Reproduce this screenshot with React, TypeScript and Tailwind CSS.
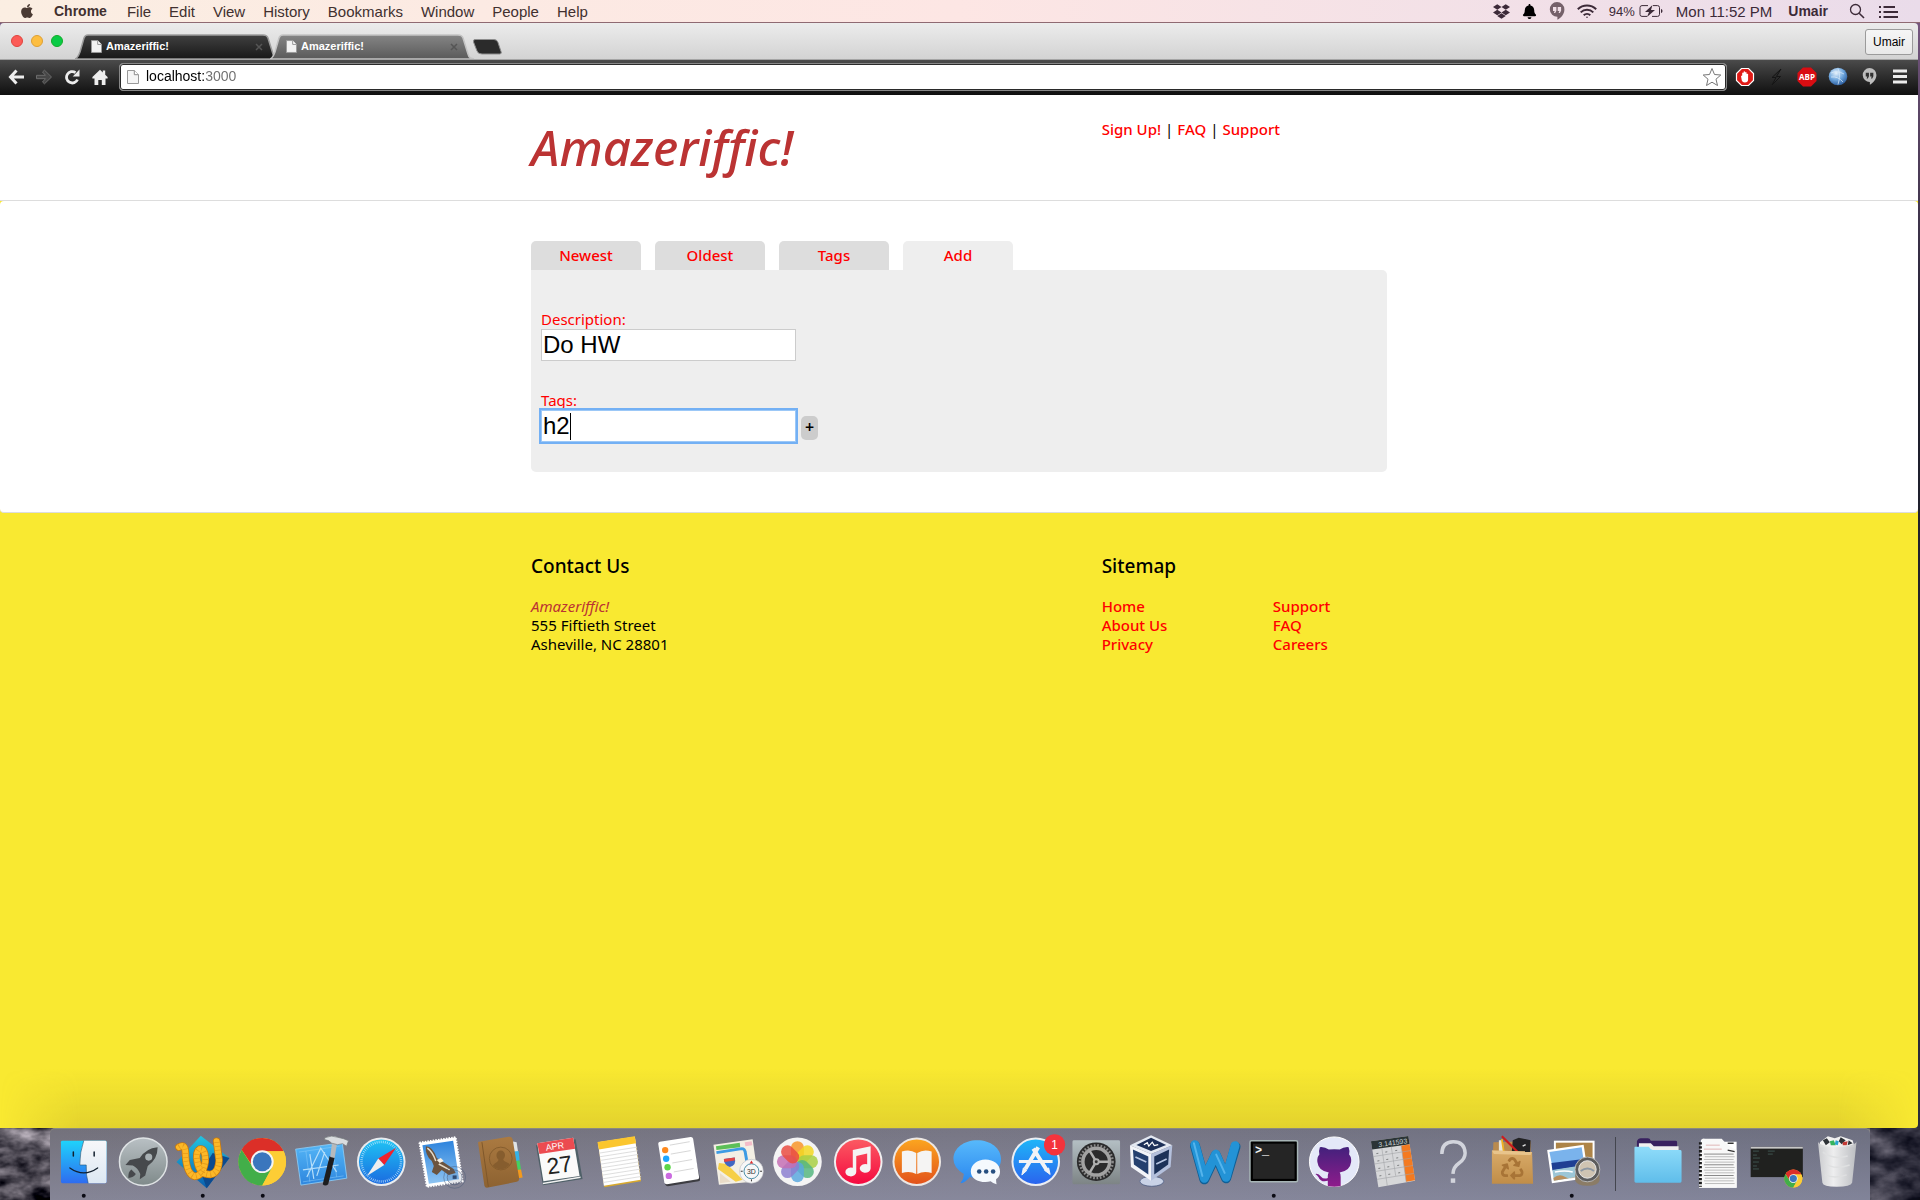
import React from "react";
import { FaApple, FaDropbox, FaBell, FaRecycle } from "react-icons/fa";

const SANS = "font-['Liberation_Sans',Arial,sans-serif]";
const BODY = "font-['Noto_Sans','Open_Sans',sans-serif]";

/* ---------- menu bar ---------- */

function Hangouts({ className }: { className: string }) {
  return (
    <svg viewBox="0 0 16 18" className={className} aria-hidden="true">
      <path
        fill="currentColor"
        fillRule="evenodd"
        d="M8 0a7.4 7.4 0 0 1 7.4 7.4c0 4.6-3.4 8.4-7 10.4v-3A7.4 7.4 0 0 1 8 0ZM4 5v4h1.7L4.9 11h1.3l1.2-2.3V5H4Zm4.7 0v4h1.7l-.8 2h1.3l1.2-2.3V5H8.700Z"
      />
    </svg>
  );
}

function MenuBar() {
  return (
    <header
      className={`${SANS} flex h-[23px] shrink-0 items-center justify-between border-b border-[#8f6a72] bg-linear-to-r from-[#fbeee2] via-[#fde6e4] to-[#eadcea] text-[15px] leading-none text-[#41302f]`}
    >
      <nav className="flex items-center" aria-label="Menu bar">
        <FaApple className="ml-[19px] size-4 text-[#4a3a33]" />
        <button className="ml-[19px] text-[14px] font-bold">Chrome</button>
        <div className="ml-5 flex gap-[18px]">
          {["File", "Edit", "View", "History", "Bookmarks", "Window", "People", "Help"].map((m) => (
            <button key={m}>{m}</button>
          ))}
        </div>
      </nav>
      <div className="flex items-center pr-[22px] text-[#3c2a38]">
        <FaDropbox className="size-[17px]" />
        <FaBell className="ml-3 size-[15px] text-black" />
        <Hangouts className="ml-3 h-[18px] w-4 text-[#75616a]" />
        <svg viewBox="0 0 20 15" className="ml-3 h-[15px] w-5" fill="none" stroke="currentColor" strokeWidth="2" aria-hidden="true">
          <path d="M.8 5.3a13.2 13.2 0 0 1 18.4 0M3.7 8.4a9 9 0 0 1 12.6 0M6.7 11.3a4.8 4.8 0 0 1 6.6 0" />
          <circle cx="10" cy="13.3" r=".8" fill="currentColor" stroke="none" />
        </svg>
        <span className="ml-3 text-[13px]">94%</span>
        <svg viewBox="0 0 24 12" className="ml-1 h-3 w-6" aria-hidden="true">
          <path d="M9 .6H3A2 2 0 0 0 1 2.600v6.800a2 2 0 0 0 2 2h5M14 .6h4.500a2 2 0 0 1 2 2v6.800a2 2 0 0 1-2 2H13" fill="none" stroke="currentColor" />
          <path d="M22 4v4c1-.4 1.500-1.200 1.500-2S23 4.400 22 4ZM13.500 0 6 7h4l-2 5 8-7h-4Z" fill="currentColor" />
        </svg>
        <span className="ml-[13px]">Mon 11:52 PM</span>
        <span className="ml-4 text-[14px] font-bold">Umair</span>
        <svg viewBox="0 0 16 16" className="ml-[21px] size-4" fill="none" stroke="currentColor" aria-hidden="true">
          <circle cx="6.500" cy="6.500" r="5" strokeWidth="1.300" />
          <path d="m10.200 10.200 4.800 4.800" strokeWidth="1.600" />
        </svg>
        <svg viewBox="0 0 19 13" className="ml-[14px] h-[13px] w-[19px]" stroke="currentColor" strokeWidth="2" aria-hidden="true">
          <path d="M0 2h2M0 7h2M0 12h2M4.500 2H16M4.500 7H19M4.500 12H19" />
        </svg>
      </div>
    </header>
  );
}

/* ---------- browser chrome ---------- */

function PageIcon({ className, fill }: { className: string; fill: string }) {
  return (
    <svg viewBox="0 0 12 14" className={className} aria-hidden="true">
      <path d="M.5.5h6.800l4.200 4.200v8.800H.5Z" fill={fill} stroke="#999" />
      <path d="M7.300.5v4.200h4.200" fill="#fff" stroke="#8a8a8a" />
    </svg>
  );
}

function BrowserTab({ active }: { active?: boolean }) {
  return (
    <div className={active ? "relative -ml-[9px] h-[25px] w-[204px]" : "relative h-[25px] w-[204px]"}>
      <svg viewBox="0 0 204 25" className="absolute inset-0 h-full w-full" preserveAspectRatio="none" aria-hidden="true">
        <defs>
          <linearGradient id={active ? "tabOn" : "tabOff"} x1="0" y1="0" x2="0" y2="1">
            <stop offset="0" stopColor={active ? "#858585" : "#404040"} />
            <stop offset="1" stopColor={active ? "#5a5a5a" : "#181818"} />
          </linearGradient>
        </defs>
        <path
          d="M0 25C3 24 4 21 5 18L9 4Q10 1 13 1H188Q192 1 193 4L198 20Q199 25 204 25Z"
          fill={active ? "url(#tabOn)" : "url(#tabOff)"}
          stroke={active ? "#c4c4c4" : "#9c9c9c"}
          strokeWidth="1.500"
        />
      </svg>
      <div className="relative flex h-full items-center pr-4 pl-4">
        <PageIcon className="h-[13px] w-[11px]" fill="#f2f2f2" />
        <button className="ml-1 grow text-left text-[11px] font-bold text-white">Amazeriffic!</button>
        <button aria-label="Close tab" className="text-[#555]">
          <svg viewBox="0 0 8 8" className="size-2" stroke="currentColor" strokeWidth="1.500" aria-hidden="true">
            <path d="m1 1 6 6M7 1 1 7" />
          </svg>
        </button>
      </div>
    </div>
  );
}

function TabStrip() {
  return (
    <div className="flex h-9 items-end rounded-t bg-linear-to-b from-[#ececec] to-[#d3d3d3]">
      <div className="flex h-full items-center gap-2 pl-[11px]">
        <span className="size-3 rounded-full border border-[#e0443e] bg-[#fc5b57]" />
        <span className="size-3 rounded-full border border-[#dea034] bg-[#fdbe41]" />
        <span className="size-3 rounded-full border border-[#12ac28] bg-[#0acb46]" />
      </div>
      <div className="ml-3 flex">
        <BrowserTab />
        <BrowserTab active />
        <button aria-label="New tab" className="-ml-[2px]">
          <svg viewBox="0 0 31 25" className="h-[25px] w-[31px]" aria-hidden="true">
            <path d="M3 5.500H22q3 0 4 3l3 9q1 2-1 2.500H10q-4 0-5-3L1.500 8Q1 5.500 3 5.500Z" fill="#2b2b2b" stroke="#8d8d8d" />
          </svg>
        </button>
      </div>
      <button className="mr-[5px] mb-1 ml-auto h-[26px] rounded-[3px] border border-[#9b9b9b] bg-linear-to-b from-[#f6f6f6] to-[#e9e9e9] px-[7px] text-[12px] text-black">
        Umair
      </button>
    </div>
  );
}

const toolButton = "flex size-5 items-center justify-center";

function Toolbar() {
  return (
    <div className="flex h-9 items-center border-t border-[#a5a5a5] bg-linear-to-b from-[#4b4b4b] to-[#101010] pb-[2px]">
      <div className="flex w-[119px] shrink-0 gap-2 pl-[6px] text-[#ededed]">
        <button aria-label="Back" className={toolButton}>
          <svg viewBox="0 0 16 16" className="size-4" fill="none" stroke="currentColor" strokeWidth="3" aria-hidden="true">
            <path d="M8.500 1.500 2.500 8l6 6.500M2.500 8H16" />
          </svg>
        </button>
        <button aria-label="Forward" className={toolButton}>
          <svg viewBox="0 0 16 16" className="size-4" fill="#474747" stroke="#6c6c6c" aria-hidden="true">
            <path d="M.5 6.300h9L6.500 3l2-1.800L15.500 8l-7 6.800-2-1.800 3-3.300h-9Z" />
          </svg>
        </button>
        <button aria-label="Reload" className={toolButton}>
          <svg viewBox="0 0 16 16" className="size-4" aria-hidden="true">
            <path d="M13.500 10.500A5.700 5.700 0 1 1 11.500 3.600" fill="none" stroke="currentColor" strokeWidth="2.800" />
            <path d="M15.500.5v7H8.700Z" fill="currentColor" />
          </svg>
        </button>
        <button aria-label="Home" className={toolButton}>
          <svg viewBox="0 0 16 16" className="size-4" fill="currentColor" aria-hidden="true">
            <path d="M8 .8 10.800 3.500V1.500h2.400v4.300L15.600 8v1.500H13.500V16H9.800v-5H6.300v5H2.500V9.500H.4V8Z" />
          </svg>
        </button>
      </div>
      <div className="flex h-7 grow items-center rounded-[4px] border border-[#888] bg-white pr-1 pl-[7px] ring-1 ring-[#2a2a2a] ring-inset">
        <PageIcon className="h-4 w-3" fill="#f5f5f5" />
        <div className="ml-[7px] grow text-[14px] text-black">
          <input
            aria-label="Address"
            defaultValue="localhost:3000"
            className="block w-full bg-linear-to-r from-black from-[58px] to-[#6d6d6d] to-[58px] bg-clip-text text-transparent outline-none"
          />
        </div>
        <svg viewBox="0 0 20 20" className="size-5" fill="#fff" stroke="#777" aria-hidden="true">
          <path d="m10 1.500 2.500 6 6.300.5-4.800 4.200 1.500 6.300L10 15.200l-5.500 3.300L6 12.200 1.200 8l6.300-.5Z" />
        </svg>
      </div>
      <div className="flex shrink-0 items-center gap-[11px] pr-2 pl-2">
        <svg viewBox="0 0 20 20" className="size-5" aria-hidden="true">
          <path d="M6.500 1.500h7l5 5v7l-5 5h-7l-5-5v-7Z" fill="#e01b17" stroke="#fff" strokeWidth="1.200" />
          <path d="M6 9l1.200-.5V6q.8-.8 1.400 0V4.700q.8-.8 1.500 0v.800q.8-.8 1.500 0V7q.9-.7 1.500 0v5.500q0 3-3.300 3-2.300 0-3-2Z" fill="#fff" />
        </svg>
        <svg viewBox="0 0 20 20" className="size-5" aria-hidden="true">
          <path d="M15 2 6 10.500h4L6 18l8.500-8.500h-4Z" fill="#2a2a2a" stroke="#151515" />
        </svg>
        <svg viewBox="0 0 20 20" className="size-5" aria-hidden="true">
          <path d="M6 .5h8L19.500 6v8L14 19.500H6L.5 14V6Z" fill="#d90d12" />
          <text x="10" y="13" textAnchor="middle" fontSize="8" fontWeight="700" fill="#fff" className="font-['Open_Sans',sans-serif]">ABP</text>
        </svg>
        <svg viewBox="0 0 20 20" className="size-5" aria-hidden="true">
          <defs>
            <radialGradient id="globe" cx=".4" cy=".3" r=".8">
              <stop offset="0" stopColor="#e8f3fc" />
              <stop offset=".5" stopColor="#6ea6dd" />
              <stop offset="1" stopColor="#1c4a8c" />
            </radialGradient>
          </defs>
          <ellipse cx="10" cy="9.500" rx="9.300" ry="8.700" fill="url(#globe)" />
          <path d="M3 6q6-3 13 1M3 10q7-1 12 5M10 1.500q3 6 0 16" fill="none" stroke="#dcecfb" strokeWidth=".7" />
        </svg>
        <span className="flex w-5 justify-center">
          <Hangouts className="h-[17px] w-[15px] text-[#bdbdbd]" />
        </span>
        <button aria-label="Chrome menu" className={toolButton}>
          <svg viewBox="0 0 14 16" className="h-4 w-[14px]" stroke="#ececec" strokeWidth="3" aria-hidden="true">
            <path d="M0 2h14M0 7.500h14M0 13h14" />
          </svg>
        </button>
      </div>
    </div>
  );
}

/* ---------- web page ---------- */

const link = "font-medium text-[#f00] hover:underline";

function Site() {
  return (
    <div className={`${BODY} grow bg-[#f9e931] text-[15px] leading-[19px] text-black`}>
      <section className="border-b border-[#ddd] bg-white">
        <div className="mx-auto flex h-[105px] max-w-[856px]">
          <h1 className="w-2/3 pt-5 text-[49px] leading-[64px] font-medium text-[#b33] italic [font-variant-ligatures:none]">Amazeriffic!</h1>
          <nav className="pt-[25px]" aria-label="Account">
            <a href="#signup" className={link}>Sign Up!</a>
            <span className="px-1">|</span>
            <a href="#faq" className={link}>FAQ</a>
            <span className="px-1">|</span>
            <a href="#support" className={link}>Support</a>
          </nav>
        </div>
      </section>
      <section className="rounded border-b border-[#ddd] bg-white py-10">
        <div className="mx-auto max-w-[856px]">
          <nav className="flex gap-[14px]" aria-label="Lists">
            {["Newest", "Oldest", "Tags"].map((t) => (
              <a key={t} href={`#${t}`} className="h-[29px] w-[110px] rounded-t-[5px] bg-[#ddd] pt-[5px] text-center font-medium text-[#f00]">
                {t}
              </a>
            ))}
            <a href="#add" className="h-[29px] w-[110px] rounded-t-[5px] bg-[#eee] pt-[5px] text-center font-medium text-[#f00]">
              Add
            </a>
          </nav>
          <form className="rounded-b-[5px] rounded-tr-[5px] bg-[#eee] px-[10px] pt-10 pb-[30px]">
            <label htmlFor="description" className="block text-[#f00]">Description:</label>
            <input
              id="description"
              defaultValue="Do HW"
              className={`${SANS} mb-[30px] block h-8 w-[255px] border border-[#ccc] bg-white px-px text-[24px] outline-none`}
            />
            <label htmlFor="tags" className="block text-[#f00]">Tags:</label>
            <div className="flex items-center gap-[5px]">
              <div className="relative">
                <input
                  id="tags"
                  defaultValue="h2"
                  className={`${SANS} block h-8 w-[255px] border border-[#9cc8f7] bg-white px-px text-[24px] ring-2 ring-[#73b0f4] outline-none`}
                />
                <span className="absolute top-[3px] left-[29px] h-[27px] w-px bg-black" />
              </div>
              <button type="button" className="mt-[3px] h-6 w-[17px] rounded-[5px] bg-[#ccc] text-center text-[16px] font-semibold">
                +
              </button>
            </div>
          </form>
        </div>
      </section>
      <footer className="mx-auto flex max-w-[856px] pt-10">
        <div className="w-2/3">
          <h2 className="mb-[18px] text-[19px] leading-[26px] font-medium">Contact Us</h2>
          <address className="not-italic">
            <em className="text-[#b33]">Amazeriffic!</em>
            <br />
            555 Fiftieth Street
            <br />
            Asheville, NC 28801
          </address>
        </div>
        <div className="w-1/3">
          <h2 className="mb-[18px] text-[19px] leading-[26px] font-medium">Sitemap</h2>
          <div className="flex">
            <ul className="w-3/5">
              {["Home", "About Us", "Privacy"].map((t) => (
                <li key={t}><a href={`#${t}`} className={link}>{t}</a></li>
              ))}
            </ul>
            <ul>
              {["Support", "FAQ", "Careers"].map((t) => (
                <li key={t}><a href={`#${t}`} className={link}>{t}</a></li>
              ))}
            </ul>
          </div>
        </div>
      </footer>
    </div>
  );
}

/* ---------- dock ---------- */

function Grad({ id, a, b }: { id: string; a: string; b: string }) {
  return (
    <linearGradient id={id} x1="0" y1="0" x2="0" y2="1">
      <stop offset="0" stopColor={a} />
      <stop offset="1" stopColor={b} />
    </linearGradient>
  );
}

function ChromeLogo() {
  return (
    <g>
      <circle r="24" fill="#fc3" />
      <path d="M-20.800-12A24 24 0 0 1 20.800-12L21-10.500H0L-9 5.500Z" fill="#dc2f28" />
      <path d="M-20.800-12A24 24 0 0 0 0 24L10 5.500-9.500 5.500Z" fill="#42ae49" />
      <path d="M0 24A24 24 0 0 0 21.600-10.500H0L10 5.500Z" fill="#fdcd35" />
      <circle r="11.500" fill="#f4f4f4" />
      <circle r="9.500" fill="#3a76bd" />
    </g>
  );
}

const ticks = (n: number) => Array.from({ length: n }, (_, i) => (i * 360) / n);

const rope = "M6 19Q12 15 12.500 24 13 46 22 48.500 30 48 32.500 34 33 20 27 21 22 24 25 36 28 47 38 46.500 46 45 46.500 32L44 13";

const apps: { name: string; running?: boolean; art: React.ReactNode }[] = [
  {
    name: "Finder",
    running: true,
    art: (
      <>
        <defs><Grad id="fnA" a="#1fd3fb" b="#2e6cf0" /><Grad id="fnB" a="#f7f7f9" b="#dce8f3" /></defs>
        <rect x="7" y="12.500" width="46" height="43" rx="1.500" fill="url(#fnA)" />
        <path d="M30 12.500Q26 24 26 37h6.500Q32 47 34.500 55.500H51.500Q53 55.500 53 54V14Q53 12.500 51.500 12.500Z" fill="url(#fnB)" />
        <path d="M30 12.500Q26 24 26 37h6.500Q32 47 34.500 55.500" fill="none" stroke="#23506f" strokeWidth=".6" />
        <path d="M19.500 24v4M40.500 24v4" stroke="#12202e" strokeWidth="1.500" strokeLinecap="round" />
        <path d="M16 40q14 10 28 0" fill="none" stroke="#12202e" strokeWidth="1.300" strokeLinecap="round" />
      </>
    ),
  },
  {
    name: "Launchpad",
    art: (
      <>
        <defs><Grad id="lp" a="#b9c0c4" b="#7f8a8a" /></defs>
        <circle cx="29.500" cy="33.700" r="24" fill="url(#lp)" stroke="#dfe3e5" strokeWidth="1.500" />
        <path d="M44 19Q32 20 26 30L16 32 11.500 37 19 37.500Q24 40 26.500 46L26 51.500 31.500 47.500 34 38Q44 31 44 19Z" fill="#46494c" />
        <path d="M17.500 41.500Q14 44 14.500 50 20 49.500 22 46Z" fill="#46494c" />
        <circle cx="35" cy="29" r="3.600" fill="#a9b1b4" />
      </>
    ),
  },
  {
    name: "WebMachine",
    running: true,
    art: (
      <>
        <defs><Grad id="wmA" a="#22c3e0" b="#0a5fae" /></defs>
        <path d="M28 7.500 57 30 34 60.500 3.500 34Z" fill="url(#wmA)" />
        <path d="M57 30 34 60.500 28 44 40 25Z" fill="#0d4a8e" />
        <path d={rope} fill="none" stroke="#c9780c" strokeWidth="7.500" strokeLinecap="round" />
        <path d={rope} fill="none" stroke="#fcb827" strokeWidth="6" strokeLinecap="round" />
        <path d={rope} fill="none" stroke="#e59a1b" strokeWidth="6" strokeDasharray=".8 3.200" />
      </>
    ),
  },
  {
    name: "Chrome",
    running: true,
    art: <g transform="translate(29.500 33.700)"><ChromeLogo /></g>,
  },
  {
    name: "Xcode",
    art: (
      <>
        <defs><Grad id="xcA" a="#55b7f7" b="#2e86de" /></defs>
        <path d="M3.700 21 50.700 14.500 55.300 50.300 9 57.300Z" fill="url(#xcA)" stroke="#8fd0fa" strokeWidth=".8" />
        <path d="M7 24 48 18M11 54 52 48M14 23l4 31M41 19l4 30" stroke="#8cccf8" strokeWidth=".5" />
        <path d="M15 49 29 20l16 24M11 42l36-5M18 26l4 25M33 24l-8 24" fill="none" stroke="#b5defa" strokeWidth="1.200" />
        <path d="M38 28 43 29.500 36.500 56.500Q33.500 59 31 56.500Z" fill="#1d1d1f" />
        <path d="M40.500 13.500 45.500 14.500 43 30 38.500 29Z" fill="#b6babd" />
        <path d="M33 9.500Q40 6.500 46 9L52 10.500 57 12.500 55 18 51 15.500 46 16.500 40 15Q37 11.500 33 11.500Z" fill="#d9dcde" stroke="#75797c" strokeWidth=".7" />
      </>
    ),
  },
  {
    name: "Safari",
    art: (
      <>
        <defs><Grad id="sf" a="#1fc3f4" b="#1a6be0" /></defs>
        <circle cx="29.500" cy="33.700" r="24.500" fill="#e9ecef" />
        <circle cx="29.500" cy="33.700" r="22.500" fill="url(#sf)" />
        {ticks(60).map((a) => (
          <path key={a} d="M29.500 12.500v2.500" stroke="#d9f1fd" strokeWidth=".6" transform={`rotate(${a} 29.500 33.700)`} />
        ))}
        <path d="M44.500 19.500 32.500 37 26.500 30.500Z" fill="#f0222c" />
        <path d="M15 48 26.500 30.500 32.500 37Z" fill="#eee" />
      </>
    ),
  },
  {
    name: "Mail",
    art: (
      <>
        <defs><Grad id="ml" a="#2e84dd" b="#8ec4f2" /></defs>
        <path d="M8.500 14.500 45 9 52 53.500 16 59Z" fill="#fff" stroke="#fff" strokeWidth="2" strokeDasharray="1.500 1.200" />
        <path d="M11.500 17 42.500 12.500 48.500 51.500 18 56Z" fill="url(#ml)" />
        <path d="M15 18Q22 18 26 30L34 35 43 41 45 45 38 47 31 42 26 47 21 44 23 38 21 33Q14 27 15 18Z" fill="#6b543f" />
        <path d="M16.500 20Q22 24 25 33M28 36l11 6" stroke="#e6dccb" strokeWidth="1.500" fill="none" />
        <path d="M26 32l4-2 3 3-4 2Z" fill="#f5f0e5" />
        <circle cx="44" cy="49.500" r="11" fill="none" stroke="#4a5a78" strokeWidth=".8" opacity=".6" />
        <circle cx="44" cy="49.500" r="7.500" fill="#4a5a78" fillOpacity=".2" stroke="#4a5a78" strokeWidth=".8" opacity=".7" />
        <rect x="42" y="47.500" width="4" height="3.500" fill="#2f4a72" />
      </>
    ),
  },
  {
    name: "Contacts",
    art: (
      <>
        <defs><Grad id="ct" a="#ab7a41" b="#8d6231" /></defs>
        <path d="M41 13l5 1 1.500 10H43Z" fill="#dfe3e6" />
        <path d="M43 23.500l5-.500 1 9.500-5 1Z" fill="#35b3e8" />
        <path d="M44 33l5-.5 1.500 9-5 1Z" fill="#45d060" />
        <path d="M45 42l5.500-.5 1.500 8-6 1Z" fill="#f39a1d" />
        <path d="M8 13.500 38 8.500Q41 8.300 42 11L48.500 50Q49 53.500 46 54L16 60Q14 60 13.500 58L7.200 15Q7 13.700 8 13.500Z" fill="url(#ct)" />
        <path d="M11 14 17.500 59" stroke="#7b5429" strokeWidth=".9" />
        <circle cx="30" cy="30.500" r="11.500" fill="none" stroke="#865d2e" />
        <path d="M30 22.500a4.300 4.300 0 0 1 4.300 4.500c0 2-.8 3-1.800 4.200.5 3 5 2.500 6.500 5.300a11 11 0 0 1-17 1.500c1-3 5.200-3.300 5.700-6.300-1.300-1-2-2.500-2-4.700a4.300 4.300 0 0 1 4.300-4.500Z" fill="#865d2e" />
      </>
    ),
  },
  {
    name: "Calendar",
    art: (
      <>
        <path d="M6 17 46 11 53 51 13 57.500Z" fill="#4f6068" />
        <path d="M13 55 51 48.500 51 50 13 56.500Z" fill="#f1f1f1" />
        <path d="M7.300 15 43.500 9.500 50 48 13.500 53.500Z" fill="#fafafa" />
        <path d="M7.300 15 43.500 9.500 45.500 20.500 9.500 26Z" fill="#ec4b50" />
        <g transform="rotate(-8 28 32)" textAnchor="middle">
          <text x="27" y="21" fontSize="9" fill="#fff">APR</text>
          <text x="29" y="45" fontSize="23" fill="#222">27</text>
        </g>
      </>
    ),
  },
  {
    name: "Notes",
    art: (
      <>
        <path d="M8 14 45.200 8.500 51.500 53.500 14.500 59.500Z" fill="#d8a92e" />
        <path d="M8 14 45.200 8.500 51 52 14 58Z" fill="#fff" />
        <path d="M7.500 13.700 45 8l1.500 7L9 21.500Z" fill="#fbc62e" />
        {[0, 1, 2, 3, 4, 5, 6, 7, 8].map((i) => (
          <path key={i} d="M9.500 25 47.500 19" stroke="#d5d5d5" strokeWidth=".8" transform={`translate(${i * 0.5} ${i * 3.7})`} />
        ))}
      </>
    ),
  },
  {
    name: "Reminders",
    art: (
      <>
        <path d="M11 16 43 11 51.500 51Q52 53 50 53.500L19 58.500Q17 58.500 16.500 57Z" fill="#3d3d42" />
        <path d="M11 13.500 42 8.700Q44 8.500 44.500 10.500L50.500 49Q51 51 49 51.500L18 56.500Q16 56.500 15.500 55L9.300 15.500Q9.200 14 11 13.500Z" fill="#fff" />
        <path d="M21 17 41 13.500M22 26l20-3.500M23.500 35l20-3.500M25 44l20-3.500" stroke="#ccc" strokeWidth=".8" />
        <circle cx="16.300" cy="22" r="3.200" fill="#ff8a1e" />
        <circle cx="17.300" cy="30.700" r="3.200" fill="#1fa7ff" />
        <circle cx="18.700" cy="39.300" r="3.200" fill="#5bd549" />
        <circle cx="20" cy="48" r="3.200" fill="#cb6be0" />
      </>
    ),
  },
  {
    name: "Maps",
    art: (
      <>
        <path d="M4.500 16.500 44 11 50 53.500 10 57Z" fill="#f3efe4" />
        <path d="M7 18 31 14.500 31.500 19 7.500 22Z" fill="#5cbf58" />
        <path d="M36 14 43 13l.7 4-7 1Z" fill="#f3bcc8" />
        <path d="M7.500 24.500 33 20.500Q36 20.500 36.500 24L39 38" fill="none" stroke="#3c9be4" strokeWidth="3" />
        <path d="M10 35 18 36 34 52 27 54 9 41Z" fill="#f6cf47" />
        <path d="M11 45 22 54 11 55.500Z" fill="#e9dcc8" />
        <path d="M15 31l11-1.500q2 8-5 9.500-6-2-6-8Z" fill="#4267c3" />
        <path d="M15 31l11-1.500v3L15.500 34Z" fill="#e14444" />
        <circle cx="42.800" cy="43.300" r="12" fill="#f7f7f7" stroke="#b9bcc0" strokeWidth=".6" />
        <circle cx="42.800" cy="43.300" r="7.500" fill="none" stroke="#4b8fa8" />
        <path d="m42.800 32.500 1.800 3h-3.600Z" fill="#e03030" />
        <path d="M42.800 51.500v2M32 43.300h2M51.500 43.300h2" stroke="#333" />
        <text x="42.800" y="46" fontSize="7" textAnchor="middle" fill="#333">3D</text>
      </>
    ),
  },
  {
    name: "Photos",
    art: (
      <>
        <circle cx="29.700" cy="33.700" r="24.500" fill="#f4f4f4" />
        {["#f8952a", "#f3d723", "#a8cf45", "#56b680", "#5ba8de", "#8c7fd0", "#c46fb4", "#ea4c42"].map((c, i) => (
          <rect key={c} x="23.200" y="13" width="13" height="20.500" rx="6.500" fill={c} opacity=".85" transform={`rotate(${i * 45} 29.700 33.700)`} />
        ))}
      </>
    ),
  },
  {
    name: "iTunes",
    art: (
      <>
        <defs><Grad id="it" a="#fb5a62" b="#f50a40" /></defs>
        <circle cx="30.500" cy="33.700" r="24.500" fill="#f0eff0" />
        <circle cx="30.500" cy="33.700" r="22.500" fill="url(#it)" />
        <path d="M25 22 43 18V40.500a5.500 4.500 0 1 1-3.500-4.300V25.500L28.500 28V44a5.500 4.500 0 1 1-3.500-4.200Z" fill="#f5f3f3" />
      </>
    ),
  },
  {
    name: "iBooks",
    art: (
      <>
        <defs><Grad id="ib" a="#fba51f" b="#e2521b" /></defs>
        <circle cx="30" cy="33.700" r="24.500" fill="#ece7e4" />
        <circle cx="30" cy="33.700" r="22.500" fill="url(#ib)" />
        <path d="M29.500 25Q23 20.500 15 23.500V45q8-2.500 14.500 1Zm1 0Q37 20.500 45 23.500V45q-8-2.500-14.500 1Z" fill="#f5f4f3" />
      </>
    ),
  },
  {
    name: "Messages",
    art: (
      <>
        <defs><Grad id="ms" a="#57b9fb" b="#2b87ef" /></defs>
        <path d="M30.500 12C44 12 54.500 20 54.500 31S44 50 30.500 50q-4 0-7.500-1-4 5.500-9.500 6.500Q17 51 17 46 6.500 40 6.500 31C6.500 20 17 12 30.500 12Z" fill="url(#ms)" />
        <path d="M38.800 31.500C47 31.500 53.500 36.500 53.500 43.500q0 5-4 8 0 3 .5 5-4-1-6-3-2.500.7-5.200.7C30.500 54.200 24 50 24 43.500S30.500 31.500 38.800 31.500Z" fill="#f5f9fd" />
        <circle cx="32.500" cy="43.500" r="2.300" fill="#264f80" /><circle cx="39.500" cy="43.500" r="2.300" fill="#264f80" /><circle cx="46.500" cy="43.500" r="2.300" fill="#264f80" />
      </>
    ),
  },
  {
    name: "App Store",
    art: (
      <>
        <defs><Grad id="as" a="#1fb5f8" b="#2a64ee" /></defs>
        <circle cx="30" cy="33.700" r="24.500" fill="#eceef2" />
        <circle cx="30" cy="33.700" r="22.500" fill="url(#as)" />
        <path d="M13 33.500h34" stroke="#f1f3f6" strokeWidth="3" />
        <path d="M32.500 19 19.500 41M27.500 20.500 41 42" stroke="#f1f3f6" strokeWidth="4" />
        <path d="M17.500 40l3.500 2.500-5 4.500ZM43 40l-4 2.500 5.500 4Z" fill="#f1f3f6" stroke="#f1f3f6" />
        <circle cx="49" cy="16.700" r="10.700" fill="#f4333c" />
        <text x="49" y="21" fontSize="12" textAnchor="middle" fill="#fff">1</text>
      </>
    ),
  },
  {
    name: "System Preferences",
    art: (
      <>
        <defs><Grad id="sp" a="#b4bfc4" b="#7d8485" /></defs>
        <rect x="6.500" y="12" width="48" height="44.500" rx="1.500" fill="url(#sp)" />
        <circle cx="30.500" cy="33.700" r="19.500" fill="#2b2b2c" />
        <circle cx="30.500" cy="33.700" r="16.500" fill="none" stroke="#8b8b8b" strokeWidth="2.500" strokeDasharray="1.700 1.700" />
        <circle cx="30.500" cy="33.700" r="13.500" fill="none" stroke="#a2a2a2" strokeWidth="3.500" />
        <path d="M30.500 33.700H43M30.500 33.700 24 23M30.500 33.700 24 44.500" stroke="#b0b0b0" strokeWidth="2.500" />
        <circle cx="30.500" cy="33.700" r="3.500" fill="#b0b0b0" />
        <circle cx="30.500" cy="33.700" r="1.500" fill="#333" />
      </>
    ),
  },
  {
    name: "VirtualBox",
    art: (
      <>
        <ellipse cx="27" cy="53.500" rx="12" ry="5" fill="#c9d2e6" stroke="#4d5d83" strokeWidth=".8" />
        <path d="M26.300 7 47.700 17 26.300 26 5 17Z" fill="#e4e9f2" />
        <path d="M5 17 26.300 26V53L6 39Z" fill="#f2f4f9" />
        <path d="M47.700 17 26.300 26V53L46 39Z" fill="#b4c0dc" />
        <path d="M26.300 9.500 41.500 16.800 26.300 23 11.500 16.800Z" fill="#1d3058" />
        <path d="M19 16.500l3.500-2 1.500 3.500 3.500-4 2 3.500 4-1" fill="none" stroke="#fff" strokeWidth="1.200" />
        <path d="M8 21.500 23.500 28.500V46.500L9 36.500Z" fill="#24406f" />
        <path d="M44.500 21.500 29.500 28.500V46.500L43.500 36.500Z" fill="#1c3158" />
        <path d="m10.500 29 11 5M31.500 36l10.500-5" stroke="#b7c5e2" strokeWidth="1.800" />
      </>
    ),
  },
  {
    name: "Word",
    art: (
      <g fill="none" strokeLinecap="round" strokeLinejoin="round">
        <path d="M10 17.500 19.500 51.500 31 27 41.500 50.500 51 18.500" stroke="#0f5f96" strokeWidth="10" />
        <path d="M10 16.500 19.500 50.500 31 26 41.500 49.500 50.500 17.500" stroke="#2393d6" strokeWidth="9" />
        <path d="m9 15 8.500 33M31.500 26.500 40 45" stroke="#55b4ec" strokeWidth="2" />
      </g>
    ),
  },
  {
    name: "Terminal",
    running: true,
    art: (
      <>
        <rect x="6" y="12.500" width="48" height="41.500" rx="1.500" fill="#000" stroke="#a7b5b6" strokeWidth="1.500" />
        <rect x="9" y="15.500" width="42" height="35.500" fill="#252525" />
        <text x="11" y="26" fontSize="12" fontWeight="700" fill="#f2f2f2" className="font-['Liberation_Mono',monospace]">{">_"}</text>
      </>
    ),
  },
  {
    name: "GitHub",
    art: (
      <>
        <defs><Grad id="gh" a="#43217c" b="#8f1c8c" /></defs>
        <circle cx="30.500" cy="33.700" r="25" fill="#e4e8f8" stroke="#fff" />
        <path d="M16 19Q21 18.500 25 21.500 30.500 20.500 36 21.500 40 18.500 45 19 46.500 23 45.500 26.500 48 29 47.500 34 46.500 43 36 44.500 37 46 37 49V58.200Q30.500 59.500 24 58.200V53Q17 55 14.500 49 13.500 47.500 11.500 46 14.500 45 17 48.500 20 52 24 50V48Q24 46 25 44.500 14.500 43 13.500 34 13 29 15.500 26.500 14.500 23 16 19Z" fill="url(#gh)" />
      </>
    ),
  },
  {
    name: "Calculator",
    art: (
      <>
        <path d="M8 13 45.700 7.700 52.500 53 15.500 59.500Z" fill="#d6d7d9" />
        <path d="M8 13 45.700 7.700 47 16 9.300 21.500Z" fill="#2b3436" />
        <text x="16" y="19" fontSize="7" fill="#cfd8da" transform="rotate(-8 16 19)">3.141593</text>
        <path d="M38.500 17.500 47 16.200 52.500 52.500 43.500 54Z" fill="#f47a20" />
        <path d="M10.500 28.500 48 22.500M11.500 36 49 30M12.500 43.500 50.500 37.500M14 51.500 51.500 45.500M19 20l5.500 38M28.500 18.500 33 48M38.500 17.500 43.500 54" stroke="#a2a4a7" strokeWidth=".6" />
        {[0, 1, 2, 3].map((i) => (
          <path key={i} d="M13.500 25.500l2-.3M22.500 24l2-.3M32.500 22.500l2-.3" stroke="#7c7e80" transform={`translate(${i} ${i * 7.5})`} />
        ))}
      </>
    ),
  },
  {
    name: "Missing application",
    art: (
      <>
        <path d="M19 26Q19 13.500 30.500 13.500T42.500 25Q42.500 31 36.500 35 30.500 39 30.200 46" fill="none" stroke="#d2d4dc" strokeWidth="3.500" />
        <rect x="28" y="50.500" width="4.500" height="4.500" fill="#d2d4dc" />
      </>
    ),
  },
  {
    name: "AppZapper",
    art: (
      <>
        <defs><Grad id="az" a="#d9ab69" b="#c08d48" /></defs>
        <path d="M11.500 14 49 13v12H11Z" fill="#b98a4e" />
        <path d="M31 12 37 9.500 49 12 48.500 24H30Z" fill="#232325" />
        <path d="M17 12h4l1 12h-5Z" fill="#e8e5da" /><path d="M20 11l2 13" stroke="#f0b01d" strokeWidth="1.800" />
        <path d="M20 8 37 25" stroke="#cc1d1d" strokeWidth="2.200" />
        <path d="M41 18l3-1.500" stroke="#ddd" strokeWidth="1.500" />
        <path d="M10 22.500 50.500 23.500 51.500 56H10Z" fill="url(#az)" />
        <path d="M10 22.500 50.500 23.500 49 27 12 26Z" fill="#e8c48b" />
        <FaRecycle x="19" y="29" size="23" color="#a87436" />
      </>
    ),
  },
  {
    name: "Preview",
    running: true,
    art: (
      <>
        <rect x="12" y="12.500" width="41" height="36" fill="#fff" />
        <rect x="14" y="14.500" width="37" height="32" fill="#ad8448" />
        <path d="M5.200 22 42 16.500 47 50 10 55.500Z" fill="#fff" />
        <path d="M7.500 24 40 19l2 13-32 4.500Z" fill="#7ab3ec" />
        <path d="M9.500 35 42 31l1 6.500-32.500 5Z" fill="#1f3f93" />
        <path d="M10.500 42 43 37l1.500 10.500L12 53Z" fill="#9cc6d6" />
        <path d="M11.500 50q6-5 12-1t20-4l.5 2.500L12 53Z" fill="#b98f5c" />
        <path d="M13 44q10-2 18 0" stroke="#fff" strokeWidth="1.500" fill="none" />
        <path d="M33.500 42V53q2 5 12.500 5T58 53V42Z" fill="#8b7c66" />
        <circle cx="45.800" cy="41.500" r="12.500" fill="#5c5c5c" stroke="#b7b7b7" />
        <circle cx="45.800" cy="41.500" r="8.800" fill="#cfc4b2" stroke="#e9e9e9" />
        <path d="M39 43q7-5 13.500 0" stroke="#8d97a2" strokeWidth="2" fill="none" />
      </>
    ),
  },
];

const files: { name: string; art: React.ReactNode }[] = [
  {
    name: "Documents",
    art: (
      <>
        <defs><Grad id="fd" a="#8fdcfa" b="#5fbdea" /></defs>
        <path d="M8 13q1-3 4-3h7q2 0 3 2.500h25q1.500 0 1.500 1.500v8H8Z" fill="#38215f" />
        <path d="M10 15h12l3 3h25v5H10Z" fill="#efefef" />
        <path d="M6 18.500h14q2 3.500 4 3.500H51.500q1.500 0 1.500 1.500V53.500Q53 55 51.500 55H7Q5.500 55 5.500 53.500V20Q5.500 18.500 6 18.500Z" fill="url(#fd)" />
      </>
    ),
  },
  {
    name: "Downloads",
    art: (
      <>
        <path d="M12 13.500H48V60H10Z" fill="#fff" />
        <path d="M12 12Q13 10 16 10.500L33 10.500Q38 17 48 22V60H11Z" fill="#f8f8f8" />
        <path d="M39 15h6M39 22l7 1.500" stroke="#333" strokeWidth="1.500" />
        <path d="M17 17h14M15 21h18" stroke="#dfb5b5" />
        {[0, 1, 2, 3, 4, 5, 6, 7, 8, 9, 10, 11].map((i) => (
          <path key={i} d="M15 26h30" stroke={i % 4 === 0 ? "#888" : "#bbb"} transform={`translate(${i % 2} ${i * 2.7})`} />
        ))}
        <path d="M11.500 14v45" stroke="#1b1b1b" strokeWidth="3" strokeDasharray="2.300 1.700" />
      </>
    ),
  },
  {
    name: "Minimised window",
    art: (
      <>
        <rect x="2.700" y="18.700" width="52.600" height="30.500" fill="#20211f" />
        <rect x="2.700" y="18.700" width="52.600" height="1.800" fill="#c8c8c8" />
        <path d="M5 23h6M5 27h4M5 30h7M5 34h6M5 38h4M5 41h6M20 23h7M20 26h5" stroke="#45605b" strokeWidth=".8" />
        <g transform="translate(45.700 50.700) scale(.38)"><ChromeLogo /></g>
      </>
    ),
  },
  {
    name: "Trash",
    art: (
      <>
        <defs>
          <linearGradient id="tr"><stop offset="0" stopColor="#cfd0d2" /><stop offset=".4" stopColor="#f4f4f4" /><stop offset="1" stopColor="#bfc1c4" /></linearGradient>
        </defs>
        <path d="M12 14 20 8 27 10 33 8 45 12 47 19H12Z" fill="#f1f1f1" />
        <path d="m15 12 4-2 3 4-4 3ZM33 9l5 3-4 4-3-3ZM41 12l4 3-5 2Z" fill="#2f3338" />
        <path d="m22 13 4-1 2 5h-5Z" fill="#35b35e" /><path d="m35 14 5-1-1 4h-4Z" fill="#c23a35" /><path d="m28 12 3 1-1 4-3-1Z" fill="#27a5cf" />
        <path d="M10 13Q10.500 18 29.500 18.500 48 18 49 13L44.500 55Q43 59 29 59T14.500 55Z" fill="url(#tr)" opacity=".95" />
        <path d="M15 24q10 8 25 4M18 36q9 6 24 1M17 47q10 4 22 0" fill="none" stroke="#dfe0e1" strokeWidth="1.500" />
      </>
    ),
  },
];

function DockItem({ name, running, art }: { name: string; running?: boolean; art: React.ReactNode }) {
  return (
    <button aria-label={name} className="min-w-0 flex-1">
      <svg viewBox="0 0 60 72" className="h-[72px] w-full overflow-visible" aria-hidden="true">
        {art}
        {running && <circle cx="30" cy="68" r="2" fill="#0b0b14" />}
      </svg>
    </button>
  );
}

function Dock() {
  return (
    <footer className={`${SANS} relative flex h-[72px] shrink-0 bg-[#24222a] px-[50px]`}>
      <svg className="absolute inset-0 h-full w-full" aria-hidden="true">
        <defs>
          <filter id="rock" x="0" y="0" width="100%" height="100%" colorInterpolationFilters="sRGB">
            <feTurbulence type="fractalNoise" baseFrequency=".03 .05" numOctaves="4" seed="8" />
            <feColorMatrix values="1.300 0 0 0 -.36  1.250 0 0 0 -.35  1.250 0 0 0 -.31  0 0 0 0 1" />
          </filter>
        </defs>
        <rect width="100%" height="100%" filter="url(#rock)" />
      </svg>
      <div className="absolute inset-y-0 right-0 w-[50px] bg-[#15182a]/50" />
      <div className="relative flex grow rounded-t-[5px] border-t border-[#8a8a80] bg-linear-to-r from-[#73717b] via-[#777684] to-[#6d6f80] pr-[3px] pl-1">
        <div className="absolute inset-0 bg-linear-to-b from-transparent to-[#a0a3bf]/40" />
        <div className="relative -mt-px flex grow">
          {apps.map((a) => (
            <DockItem key={a.name} {...a} />
          ))}
          <div className="flex w-7 shrink-0 items-center justify-center">
            <span className="h-[54px] w-px bg-[#44464f]" />
          </div>
          {files.map((a) => (
            <DockItem key={a.name} {...a} />
          ))}
        </div>
      </div>
    </footer>
  );
}

export default function App() {
  return (
    <div className="flex min-h-screen flex-col bg-[#24222a]">
      <MenuBar />
      <div className="flex grow flex-col bg-linear-to-b from-[#75567f] via-[#1d1d2a] via-30% to-[#2a2c3c] pr-[2px]">
        <div className={SANS}>
          <TabStrip />
          <Toolbar />
        </div>
        <div className="relative flex grow flex-col overflow-hidden rounded-br">
          <Site />
          <div className="absolute inset-x-0 bottom-0 h-[60px] bg-linear-to-b from-transparent to-[#8a7a20]/20 [mask-image:linear-gradient(to_right,transparent,black_80px,black_calc(100%-80px),transparent)]" />
        </div>
      </div>
      <Dock />
    </div>
  );
}
